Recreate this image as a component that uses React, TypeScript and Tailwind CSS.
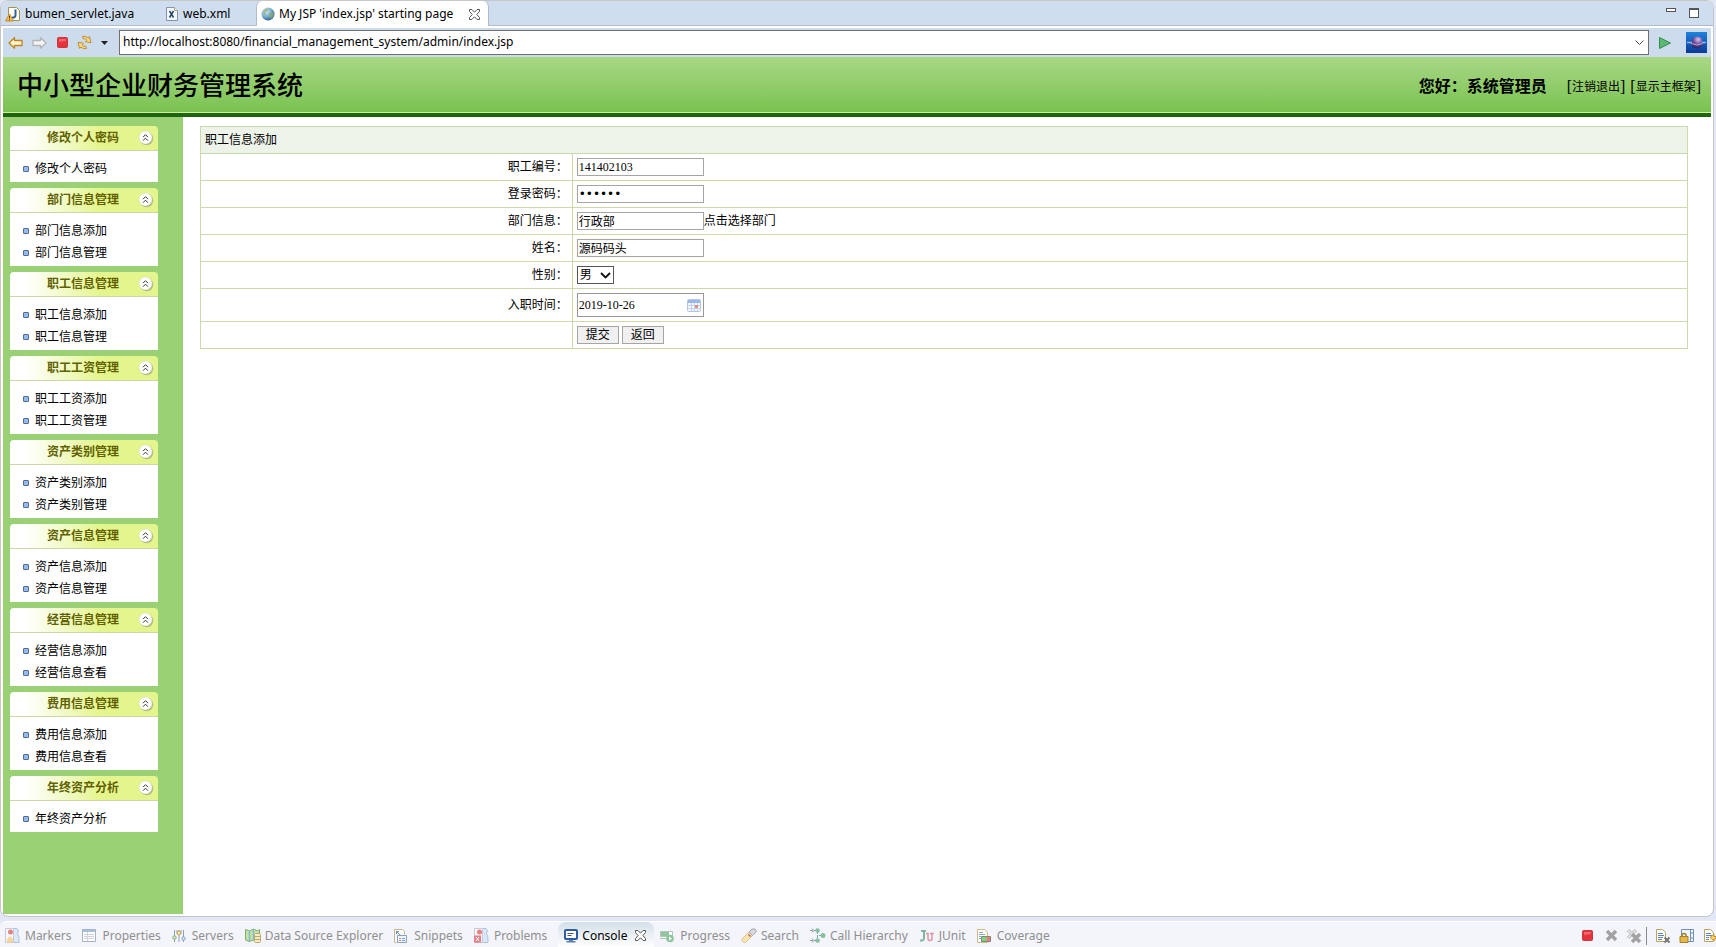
import type { ReactNode } from "react";

const MENU = [
  { title: "修改个人密码", items: ["修改个人密码"] },
  { title: "部门信息管理", items: ["部门信息添加", "部门信息管理"] },
  { title: "职工信息管理", items: ["职工信息添加", "职工信息管理"] },
  { title: "职工工资管理", items: ["职工工资添加", "职工工资管理"] },
  { title: "资产类别管理", items: ["资产类别添加", "资产类别管理"] },
  { title: "资产信息管理", items: ["资产信息添加", "资产信息管理"] },
  { title: "经营信息管理", items: ["经营信息添加", "经营信息查看"] },
  { title: "费用信息管理", items: ["费用信息添加", "费用信息查看"] },
  { title: "年终资产分析", items: ["年终资产分析"] },
];

const CloseIcon = () => (
  <svg width="11" height="11" viewBox="0 0 11 11" fill="#fff" stroke="#555">
    <path d="M.5.5h2.4L5.5 3.2 8.1.5h2.4v2L7.8 5.5l2.7 3v2H8.1L5.5 7.8 2.9 10.5H.5v-2l2.7-3-2.7-3z" />
  </svg>
);

const JavaFileIcon = () => (
  <svg width="16" height="16" viewBox="0 0 16 16">
    <path d="M3.500 1.500h8l3 3v10h-11z" fill="#fdfdf5" stroke="#a98f4f" />
    <path d="M10.500 3.500v5.500q0 3-3.500 2.500" fill="none" stroke="#2e6393" strokeWidth="2" />
    <path d="M4.500 8L8.500 15h-8z" fill="#fbc04a" stroke="#c68b33" strokeLinejoin="round" />
    <path d="M4.500 10v2.500M4.500 13.300v1" stroke="#5c3a10" />
  </svg>
);

const XmlFileIcon = () => (
  <svg width="12" height="14" viewBox="0 0 12 14">
    <path d="M.5.5h8l3 3v10H.5z" fill="#f2f7fd" stroke="#8a93ad" />
    <path d="M8.500.5v3h3" fill="#fff" stroke="#c0a566" />
    <path d="M3.500 4l4 6.500M7.500 4l-4 6.500" stroke="#20466f" strokeWidth="1.500" />
  </svg>
);

const GlobeIcon = () => (
  <svg width="14" height="14" viewBox="0 0 14 14">
    <defs>
      <radialGradient id="globe" cx=".35" cy=".3" r=".8">
        <stop offset="0" stopColor="#e4f1f8" />
        <stop offset=".55" stopColor="#6da5cc" />
        <stop offset="1" stopColor="#1f4f86" />
      </radialGradient>
    </defs>
    <circle cx="7" cy="7" r="6.500" fill="url(#globe)" />
    <path d="M2 4.500Q4 1 7.500 1.500L7 4 4.500 5.500 5 8 3.500 8.500zM8 6l4-1 1 3-3 4-2-2z" fill="#8fae72" opacity=".7" />
  </svg>
);

const ArrowIcon = ({ forward = false }: { forward?: boolean }) => (
  <svg width="15" height="12" viewBox="0 0 15 12">
    <path
      d={forward ? "M14 6L8.500 .8v2.700H1v5h7.500v2.700z" : "M1 6L6.500 .8v2.700H14v5H6.500v2.700z"}
      fill={forward ? "#f4f4f4" : "#fdf4cc"}
      stroke={forward ? "#b4b4b4" : "#bd8420"}
      strokeWidth="1.300"
      strokeLinejoin="round"
    />
  </svg>
);

const StopIcon = () => (
  <svg width="11" height="11" viewBox="0 0 11 11">
    <rect x=".5" y=".5" width="10" height="10" rx="1" fill="#e5323c" stroke="#c8383c" />
    <path d="M2 5V2h7v2z" fill="#f2676b" />
  </svg>
);

const RefreshIcon = () => (
  <svg width="15" height="15" viewBox="0 0 15 15" fill="#fbdc83" stroke="#c08a30" strokeLinejoin="round">
    <path d="M5.500 1.500Q9 .5 11 3l1.500-1.300 1.500 6-5.500-1L10 5.200Q8.500 3 6.500 4z" />
    <path d="M9.500 13.500Q6 14.500 4 12l-1.500 1.300L1 7.300l5.500 1L5 9.800q1.500 2.200 3.500 1.200z" />
  </svg>
);

const CollapseIcon = () => (
  <svg width="16" height="16" viewBox="0 0 16 16" fill="none">
    <circle cx="8.500" cy="8.500" r="6.700" fill="#9aa07a" opacity=".75" />
    <circle cx="7.500" cy="7.500" r="6.500" fill="#fff" stroke="#d9dbc4" strokeWidth=".6" />
    <path d="M5 7.200l2.500-2.500L10 7.200M5 10.700l2.500-2.500 2.500 2.500" stroke="#333" />
  </svg>
);

const CalendarIcon = () => (
  <svg width="14" height="13" viewBox="0 0 14 13">
    <rect x=".5" y=".5" width="13" height="12" rx="1" fill="#f4f8ff" stroke="#b4c6e6" />
    <path d="M1 1h12v3H1z" fill="#9db8e8" />
    <path d="M1 6.500h12M1 9.500h12M4.500 4v8M7.500 4v8M10.500 4v8" stroke="#c3d2ef" />
    <path d="M8 6h3v3H8z" fill="#e58a74" />
  </svg>
);

const EclipseIcon = () => (
  <svg width="21" height="21" viewBox="0 0 21 21">
    <defs>
      <linearGradient id="sky" x1="0" y1="0" x2="0" y2="1">
        <stop offset="0" stopColor="#1d83dd" />
        <stop offset="1" stopColor="#0a3a94" />
      </linearGradient>
      <radialGradient id="moon" cx=".6" cy=".25" r=".8">
        <stop offset="0" stopColor="#d9c3ea" />
        <stop offset=".5" stopColor="#6b4c9c" />
        <stop offset="1" stopColor="#1d1a55" />
      </radialGradient>
    </defs>
    <path d="M0 0h21v21H0z" fill="url(#sky)" />
    <circle cx="11" cy="10.500" r="6" fill="url(#moon)" />
    <path d="M1 10.500h5M16 10.500h4" stroke="#8fb6ee" strokeWidth="1.500" />
    <path d="M5 11.500q6 3 12 0" fill="none" stroke="#b7a3dc" />
  </svg>
);

const MarkersIcon = ({ error = false }: { error?: boolean }) => (
  <svg width="15" height="15" viewBox="0 0 15 15">
    <path d="M.5.5h8v14h-8z" fill="#f6f7fb" stroke="#c5cbd8" />
    <path d="M9 .5h3q2.500 2 .5 5 2 3 1.500 9H9" fill="#dde8f6" stroke="#a9c2dd" />
    <circle cx="5.500" cy="4" r="2.500" fill="#e88080" />
    {error ? (
      <>
        <path d="M0 7.500h7v7H0z" fill="#e57f86" />
        <path d="M2 9l3 4M5 9l-3 4" stroke="#fff" />
      </>
    ) : (
      <path d="M2 14.500v-2Q2.500 9 5 8.500q2.500.5 3 4v2z" fill="#f7d49a" />
    )}
  </svg>
);

const PropertiesIcon = () => (
  <svg width="14" height="13" viewBox="0 0 14 13">
    <path d="M.5.5h13v12H.5z" fill="#fff" stroke="#a3b3ca" />
    <path d="M1 1h12v2H1z" fill="#a9bfdc" />
    <path d="M5.500 3v9M2 5.500h10M2 7.500h10M2 9.500h10" stroke="#cfd4dc" />
  </svg>
);

const ServersIcon = () => (
  <svg width="14" height="14" viewBox="0 0 14 14" fill="none">
    <path d="M2.500 1v12M7 1v12M11.500 1v12M5 1v4M9 1v4" stroke="#8c9fb5" />
    <circle cx="2.500" cy="8.500" r="1.700" fill="#d6efc0" stroke="#7ca774" />
    <circle cx="7" cy="4" r="1.900" fill="#ffe9a8" stroke="#cbaa5c" />
    <circle cx="11.500" cy="9.500" r="1.700" fill="#dcebf8" stroke="#7f9dbe" />
  </svg>
);

const DataSourceIcon = () => (
  <svg width="16" height="15" viewBox="0 0 16 15">
    <path d="M.5 1.500l4 1.500 4-2 4 2 2-1.500v11l-2 1.500-4-2-4 1.500-4-1.500z" fill="#c2e3a2" stroke="#7fae70" />
    <path d="M4.500 3v10M8.500 1.500v10" stroke="#86b8d0" strokeWidth="1.500" />
    <rect x="9.500" y="5.500" width="6" height="9" rx="1" fill="#f6ecc4" stroke="#bca877" />
    <path d="M10 8.500h5M10 11.500h5" stroke="#bca877" />
  </svg>
);

const SnippetsIcon = () => (
  <svg width="13" height="14" viewBox="0 0 13 14" fill="none">
    <path d="M.5.5h8l2 2v3M.5.5v13h2" fill="#fff" stroke="#c4b68e" />
    <path d="M3.500 6.500h9v7h-9z" fill="#eef4fc" stroke="#8ba4c4" />
    <path d="M5 9.500h2M5 11.500h2" stroke="#da8585" />
    <path d="M8 9.500h3M8 11.500h3" stroke="#7ea5cf" />
    <path d="M2.500 5V2.500H5M2.500 2.500l4 4" stroke="#7b8da3" />
  </svg>
);

const ConsoleIcon = () => (
  <svg width="14" height="14" viewBox="0 0 14 14">
    <rect x="1" y="1" width="12" height="9" rx="1" fill="#fff" stroke="#2f5ca6" strokeWidth="2" />
    <path d="M3.500 4.500h6M3.500 6.500h4" stroke="#4a5568" />
    <path d="M5 11h4v1h2.500v1.500h-9V12H5z" fill="#5c7fae" />
  </svg>
);

const ProgressIcon = () => (
  <svg width="14" height="14" viewBox="0 0 14 14">
    <path d="M.5 2.500h12v5H.5z" fill="#fff" stroke="#b3c4b8" />
    <path d="M1 3h8v4H1z" fill="#93c6a0" />
    <path d="M0 9.500h6" stroke="#b3c4b8" />
    <circle cx="10" cy="9.500" r="3.800" fill="#8cc69a" />
    <path d="M9 7.500l3 2-3 2z" fill="#fff" />
  </svg>
);

const SearchIcon = () => (
  <svg width="16" height="15" viewBox="0 0 16 15">
    <path d="M1 11l7-7 3.500 3.500-7 7q-4-.5-3.500-3.500z" fill="#fbe4b0" stroke="#dfc08a" />
    <path d="M8 4l3-3h3q1.500.5 1 3l-3.500 3.500z" fill="#d9d7df" stroke="#aaa4b4" />
    <path d="M7.500 6.500l2 2" stroke="#a06c5e" strokeWidth="1.500" />
  </svg>
);

const HierarchyIcon = () => (
  <svg width="16" height="15" viewBox="0 0 16 15">
    <path d="M0 2.500h8M0 12.500h8M7.500 3v9M9 7.500h4" stroke="#8b9bac" strokeDasharray="3 1" fill="none" />
    <path d="M2 .5l2 2-2 2M2 10.500l2 2-2 2" stroke="#8b9bac" fill="none" />
    <circle cx="7.500" cy="2.500" r="2.300" fill="#84c19c" />
    <circle cx="13" cy="7.500" r="2.500" fill="#84c19c" />
    <circle cx="7.500" cy="12.500" r="2.300" fill="#84c19c" />
  </svg>
);

const JUnitIcon = () => (
  <svg width="15" height="14" viewBox="0 0 15 14" fill="none" strokeWidth="2">
    <path d="M2 2h5M5 2v7q0 3-4 2.500" stroke="#82b5a0" />
    <path d="M7 4.500h2v5q0 2 2 2t2-2v-5M11 4.500h4" stroke="#e3939f" strokeWidth="1.500" />
  </svg>
);

const CoverageIcon = () => (
  <svg width="14" height="14" viewBox="0 0 14 14">
    <path d="M.5.500h7l3 3v10H.5z" fill="#fffdf4" stroke="#cbb98a" />
    <path d="M2 3.500h4M2 5.500h6M2 7.500h2M2 9.500h2" stroke="#91a9cb" />
    <path d="M4.500 7.500h9v5h-9z" fill="#f07a7a" stroke="#7c8a7c" />
    <path d="M5 8h4.500v4H5z" fill="#7cd67c" />
  </svg>
);

const VIEWS: { name: string; icon: ReactNode; active?: boolean }[] = [
  { name: "Markers", icon: <MarkersIcon /> },
  { name: "Properties", icon: <PropertiesIcon /> },
  { name: "Servers", icon: <ServersIcon /> },
  { name: "Data Source Explorer", icon: <DataSourceIcon /> },
  { name: "Snippets", icon: <SnippetsIcon /> },
  { name: "Problems", icon: <MarkersIcon error /> },
  { name: "Console", icon: <ConsoleIcon />, active: true },
  { name: "Progress", icon: <ProgressIcon /> },
  { name: "Search", icon: <SearchIcon /> },
  { name: "Call Hierarchy", icon: <HierarchyIcon /> },
  { name: "JUnit", icon: <JUnitIcon /> },
  { name: "Coverage", icon: <CoverageIcon /> },
];

const RemoveIcon = ({ all = false }: { all?: boolean }) => (
  <svg width={all ? 16 : 13} height={all ? 16 : 13} viewBox={all ? "0 0 16 16" : "0 0 13 13"}>
    {all && <path d="M2 2l8 8M10 2l-8 8" stroke="#aaa" strokeWidth="3" />}
    {all && <path d="M2 2l8 8M10 2l-8 8" stroke="#eee" strokeWidth="1.500" />}
    <path d={all ? "M6 6l8 8M14 6l-8 8" : "M2 2l9 9M11 2l-9 9"} stroke="#a2a2a2" strokeWidth="3.500" />
  </svg>
);

const ClearIcon = () => (
  <svg width="16" height="16" viewBox="0 0 16 16" fill="none">
    <path d="M1.500 1.500h6l3 3v9h-9z" fill="#fffdf2" stroke="#b9a467" />
    <path d="M3 5.500h5M3 7.500h6M3 9.500h5M3 11.500h4" stroke="#5f86bd" />
    <path d="M9.500 9.500l5 5M14.500 9.500l-5 5" stroke="#777" strokeWidth="2" />
  </svg>
);

const LockIcon = () => (
  <svg width="16" height="16" viewBox="0 0 16 16" fill="none">
    <path d="M2.500 1.500h12v12h-12z" fill="#f2f7fd" stroke="#6c8fc0" />
    <path d="M11.500 2v11M12 5h2M12 10h2" stroke="#6c8fc0" />
    <path d="M3 9V7.500q0-2 2-2t2 2V9" stroke="#9c7a2c" strokeWidth="1.500" />
    <path d="M1 8.500h8v6H1z" fill="#e6b84a" stroke="#a97f27" />
  </svg>
);

const WrapIcon = () => (
  <svg width="13" height="16" viewBox="0 0 13 16" fill="none">
    <path d="M1.500 1.500h6l3 3v9h-9z" fill="#fffdf2" stroke="#b9a467" />
    <path d="M3 5.500h5M3 7.500h6M3 9.500h3M3 11.500h3" stroke="#5f86bd" />
    <path d="M7 9.500l4-3v2h2v2.500h-2v2z" fill="#fbd873" stroke="#c08a30" />
  </svg>
);

function EditorTabs() {
  return (
    <div className="flex h-[25px] items-stretch justify-between border-b border-[#b4b9cc] bg-[#cfdeee]">
      <div className="flex">
        <button className="flex w-40 items-center gap-1 pt-[2px] pl-1">
          <JavaFileIcon />
          bumen_servlet.java
        </button>
        <button className="flex w-[95px] items-center gap-[5px] pt-[2px] pl-[5px]">
          <XmlFileIcon />
          web.xml
        </button>
        <button className="-mb-px flex w-[233px] items-center gap-1 rounded-t-md border-x border-[#b4b9cc] bg-white pt-px pr-2 pl-1">
          <GlobeIcon />
          <span className="grow text-left">My JSP 'index.jsp' starting page</span>
          <CloseIcon />
        </button>
      </div>
      <div className="flex items-start gap-[13px] pt-[7px] pr-[14px]">
        <button aria-label="Minimize" className="h-1 w-[10px] border border-[#555] bg-white" />
        <button aria-label="Maximize" className="h-[10px] w-[10px] border border-t-2 border-[#555] bg-white" />
      </div>
    </div>
  );
}

function BrowserBar() {
  return (
    <div className="mt-[2px] flex h-[29px] items-center bg-[#cddcec] pr-1 pl-[5px]">
      <div className="mr-[11px] flex w-[100px] items-center justify-between">
        <button aria-label="Back"><ArrowIcon /></button>
        <button aria-label="Forward"><ArrowIcon forward /></button>
        <button aria-label="Stop"><StopIcon /></button>
        <button aria-label="Refresh"><RefreshIcon /></button>
        <button aria-label="Refresh options">
          <svg width="7" height="4" viewBox="0 0 7 4"><path d="M0 0h7L3.500 4z" fill="#222" /></svg>
        </button>
      </div>
      <div className="flex h-[25px] grow items-center border border-[#707070] bg-white pr-1 pl-[3px]">
        <input
          aria-label="Address"
          className="min-w-0 grow pb-[2px] outline-none"
          defaultValue="http://localhost:8080/financial_management_system/admin/index.jsp"
        />
        <svg width="9" height="6" viewBox="0 0 9 6" fill="none"><path d="M.5.5l4 4 4-4" stroke="#444" /></svg>
      </div>
      <button aria-label="Go" className="ml-[10px]">
        <svg width="12" height="12" viewBox="0 0 12 12"><path d="M.5.5v11L11.500 6z" fill="#5fb878" stroke="#2f8f4c" /></svg>
      </button>
      <div className="ml-[15px]"><EclipseIcon /></div>
    </div>
  );
}

function Header() {
  return (
    <header className="flex h-[60px] items-center justify-between border-b-4 border-[#1f6410] bg-linear-to-b from-[#a9d785] to-[#78c24f] pt-[3px] pr-[10px] pl-[14px] shadow-[inset_0_-1px_0_#cdf09a]">
      <h1 className="pt-px text-[26px] font-medium">中小型企业财务管理系统</h1>
      <div className="flex items-center">
        <span className="mr-5 text-base font-bold">您好：系统管理员</span>
        <a href="#logout" className="mr-[5px] flex items-center text-base">[<span className="text-xs">注销退出</span>]</a>
        <a href="#frame" className="flex items-center text-base">[<span className="text-xs">显示主框架</span>]</a>
      </div>
    </header>
  );
}

function Sidebar() {
  return (
    <aside className="flex w-[180px] shrink-0 flex-col gap-[6px] bg-[#9ad174] pt-[9px] pl-[7px]">
      {MENU.map(({ title, items }) => (
        <section key={title} className="w-[148px]">
          <button className="relative flex h-[25px] w-full items-center justify-center rounded-t border-b border-[#cdd6a8] bg-linear-to-r from-white from-10% to-[#e5f58e] to-60% pr-[2px] font-bold text-[#616100]">
            {title}
            <span className="absolute right-1"><CollapseIcon /></span>
          </button>
          <ul className="bg-white pt-[7px] pb-[2px] pl-[13px]">
            {items.map((item) => (
              <li key={item} className="flex h-[22px] items-center gap-[6px]">
                <span className="h-[6px] w-[6px] rounded-[1px] border border-[#586b85] bg-[#8fbcf2]" />
                <a href="#menu">{item}</a>
              </li>
            ))}
          </ul>
        </section>
      ))}
    </aside>
  );
}

const FIELD = "block h-[18px] w-[127px] border border-[#a5a5a5] bg-white pl-px outline-none";

function Row({ label, id, children }: { label?: string; id?: string; children: ReactNode }) {
  return (
    <tr>
      <td className="w-1/4 border border-[#cbdaa9] pr-1 text-right">
        {label && <label htmlFor={id}>{label}：</label>}
      </td>
      <td className="h-[27px] border border-[#cbdaa9] px-1 py-1">
        <div className="flex items-center">{children}</div>
      </td>
    </tr>
  );
}

function EmployeeForm() {
  return (
    <main className="grow bg-white pt-[9px] pr-[23px] pl-[17px]">
      <form>
        <table className="w-full border-collapse">
          <thead>
            <tr>
              <th colSpan={2} className="h-[27px] border border-[#cbdaa9] bg-[#edf3e9] px-1 text-left font-normal">
                职工信息添加
              </th>
            </tr>
          </thead>
          <tbody>
            <Row label="职工编号" id="number"><input id="number" className={FIELD} defaultValue="141402103" /></Row>
            <Row label="登录密码" id="password">
              <input
                id="password"
                type="password"
                className="block h-[18px] w-[127px] border border-[#a5a5a5] bg-white pl-px font-['DejaVu_Sans',sans-serif] outline-none"
                defaultValue="123456"
              />
            </Row>
            <Row label="部门信息" id="department">
              <input id="department" className={FIELD} defaultValue="行政部" />
              点击选择部门
            </Row>
            <Row label="姓名" id="name"><input id="name" className={FIELD} defaultValue="源码码头" /></Row>
            <Row label="性别" id="gender">
              <div className="relative flex items-center">
                <select id="gender" className="h-[18px] w-[37px] appearance-none border border-[#555] bg-white pl-[2px]">
                  <option>男</option>
                  <option>女</option>
                </select>
                <svg className="pointer-events-none absolute right-[3px]" width="11" height="7" viewBox="0 0 11 7" fill="none">
                  <path d="M1 1l4.500 4.500L10 1" stroke="#111" strokeWidth="1.800" />
                </svg>
              </div>
            </Row>
            <Row label="入职时间" id="date">
              <div className="relative flex items-center">
                <input id="date" className="h-6 w-[127px] border border-[#999] pl-px outline-none" defaultValue="2019-10-26" />
                <span className="absolute right-[3px]"><CalendarIcon /></span>
              </div>
            </Row>
            <Row>
              <div className="flex gap-[3px]">
                <button type="button" className="h-[18px] w-[42px] border border-[#a5a5a5] bg-[#f0f0f0] leading-4">提交</button>
                <button type="button" className="h-[18px] w-[42px] border border-[#a5a5a5] bg-[#f0f0f0] leading-4">返回</button>
              </div>
            </Row>
          </tbody>
        </table>
      </form>
    </main>
  );
}

function ViewBar() {
  return (
    <footer className="flex h-[26px] shrink-0 items-stretch justify-between overflow-hidden rounded-tl-md border-t border-white bg-[#f4f5fb] text-[#8f8f8f]">
      <div className="flex pl-[5px]">
        {VIEWS.map(({ name, icon, active }) =>
          active ? (
            <button key={name} className="mr-[6px] flex w-24 items-center gap-1 rounded-t-lg bg-linear-to-b from-[#d3dfea] to-white pt-[2px] pr-2 pl-[6px] text-black">
              {icon}
              <span className="grow text-left">{name}</span>
              <CloseIcon />
            </button>
          ) : (
            <button key={name} className="flex items-center gap-1 pt-[2px] pr-[11px]">
              <span className="flex w-4">{icon}</span>
              {name}
            </button>
          )
        )}
      </div>
      <div className="flex items-center gap-2 pt-[2px]">
        <button aria-label="Terminate" className="mr-1"><StopIcon /></button>
        <button aria-label="Remove launch"><RemoveIcon /></button>
        <button aria-label="Remove all"><RemoveIcon all /></button>
        <span className="-ml-1 h-[18px] w-px bg-[#8a8a8a]" />
        <button aria-label="Clear console"><ClearIcon /></button>
        <button aria-label="Scroll lock"><LockIcon /></button>
        <button aria-label="Word wrap"><WrapIcon /></button>
      </div>
    </footer>
  );
}

export default function App() {
  return (
    <div className="flex min-h-screen flex-col bg-[#e1e7f6] font-['Noto_Sans','Noto_Sans_CJK_SC',sans-serif] text-xs text-black">
      <div className="mr-[2px] mb-1 flex grow flex-col overflow-hidden rounded-lg border border-[#c6c6c6] bg-white">
        <EditorTabs />
        <div className="mr-[2px] mb-[2px] ml-[2px] flex grow flex-col">
          <BrowserBar />
          <div className="flex grow flex-col font-['Liberation_Serif','Noto_Sans_CJK_SC',serif]">
            <Header />
            <div className="flex grow">
              <Sidebar />
              <EmployeeForm />
            </div>
          </div>
        </div>
      </div>
      <ViewBar />
    </div>
  );
}
